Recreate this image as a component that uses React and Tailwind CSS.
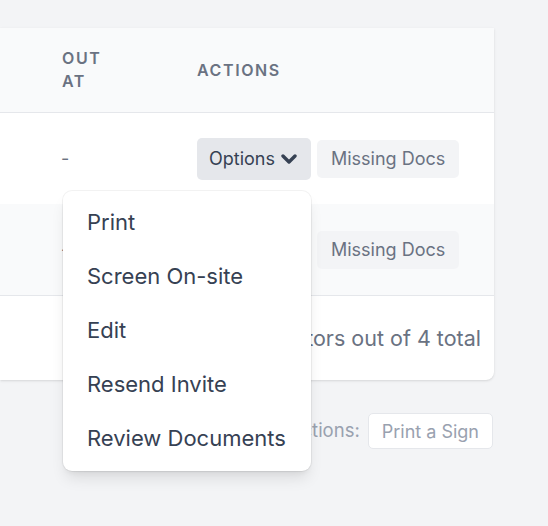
import { useState } from 'react';

const menuItems = ['Print', 'Screen On-site', 'Edit', 'Resend Invite', 'Review Documents'];

function Chevron() {
  return (
    <svg viewBox="0 0 16 10" className="w-[16px] h-[10px]" fill="none" stroke="currentColor" strokeWidth="3.4" strokeLinecap="round" strokeLinejoin="round">
      <polyline points="2,2 8,8 14,2" />
    </svg>
  );
}

function OptionsMenu({ open, onToggle }) {
  return (
    <div className="relative">
      <button
        type="button"
        onClick={onToggle}
        className="flex items-center gap-[6px] h-[42px] pl-[12px] pr-[14px] rounded-[5px] bg-gray-200 text-gray-700 text-[18px]"
      >
        Options
        <Chevron />
      </button>
      {open && (
        <div className="absolute right-0 top-[53px] z-10 w-[248px] py-[5px] bg-white rounded-[9px] shadow-lg ring-1 ring-black/5">
          {menuItems.map(item => (
            <div key={item} className="h-[54px] flex items-center px-[24px] text-[22px] text-gray-700">
              {item}
            </div>
          ))}
        </div>
      )}
    </div>
  );
}

function Actions({ open, onToggle }) {
  return (
    <div className="flex items-center gap-[6px]">
      <OptionsMenu open={open} onToggle={onToggle} />
      <span className="h-[38px] flex items-center px-[14px] rounded-[5px] bg-gray-100 text-gray-500 text-[18px]">
        Missing Docs
      </span>
    </div>
  );
}

export default function App() {
  const [openRow, setOpenRow] = useState(0);

  const toggle = (i) => setOpenRow(prev => (prev === i ? null : i));

  return (
    <div className="min-h-[526px] bg-gray-100 pt-[28px] font-['Inter',sans-serif]">
      <div className="w-[494px] bg-white rounded-br-lg shadow">
        <div className="h-[85px] flex items-center bg-gray-50 border-b border-gray-200 text-[16px] font-semibold uppercase tracking-[0.1em] text-gray-500 leading-[23px]">
          <div className="w-[197px] pl-[62px]">
            <div className="w-[48px]">Out At</div>
          </div>
          <div>Actions</div>
        </div>

        <div className="h-[91px] flex items-center bg-white">
          <div className="w-[197px] pl-[61px] text-[18px] text-gray-500">-</div>
          <Actions open={openRow === 0} onToggle={() => toggle(0)} />
        </div>

        <div className="h-[92px] flex items-center bg-gray-50 border-b border-gray-200">
          <div className="w-[197px] pl-[61px] text-[18px] text-gray-500">-</div>
          <Actions open={openRow === 1} onToggle={() => toggle(1)} />
        </div>

        <div className="h-[84px] flex items-center justify-end pr-[13px] text-[21.5px] text-gray-500">
          Showing 4 visitors out of 4 total
        </div>
      </div>

      <div className="w-[494px] mt-[33px] flex items-center justify-end gap-[8px] pr-px">
        <span className="text-[18.5px] text-gray-400">Quick Actions:</span>
        <button type="button" className="h-[36px] px-[13px] rounded-[5px] bg-white border border-gray-200 text-[18px] text-gray-400">
          Print a Sign
        </button>
      </div>
    </div>
  );
}
